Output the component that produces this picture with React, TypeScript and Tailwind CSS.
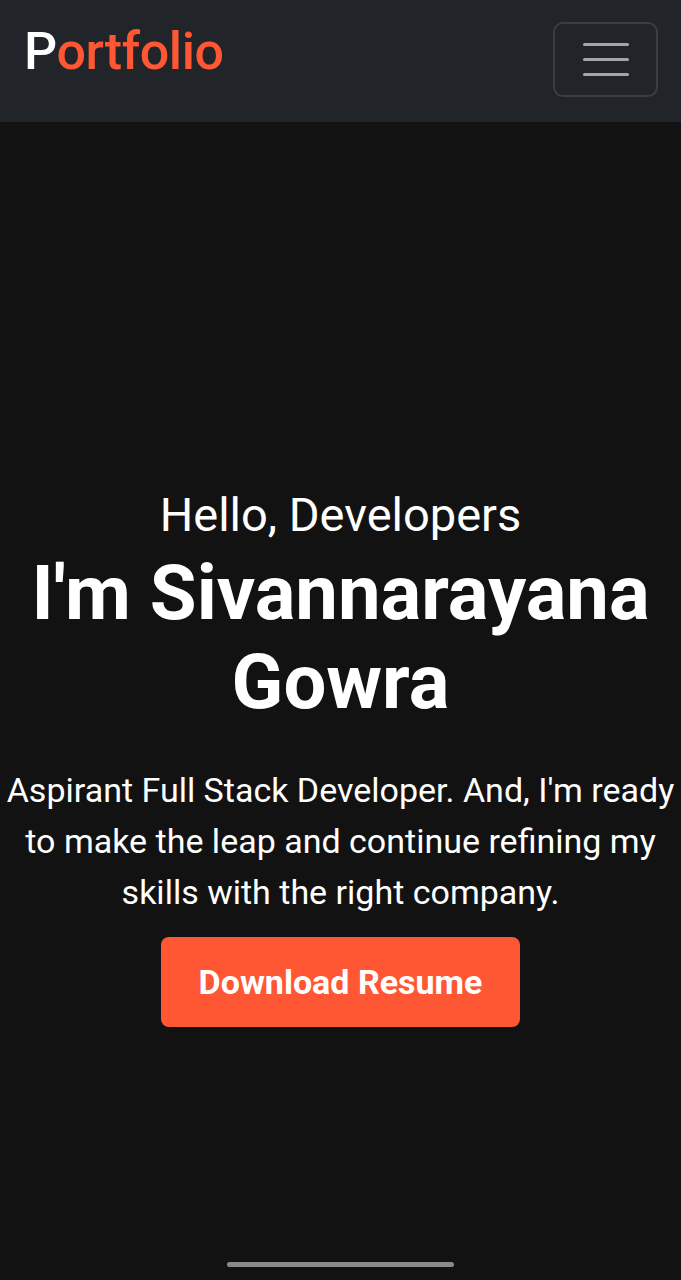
export default function App() {
  return (
    <div className="flex min-h-screen flex-col bg-[#121212] text-white" style={{ fontFamily: "Roboto, 'Noto Sans', sans-serif" }}>
      <nav className="flex h-[122px] items-start justify-between bg-[#212529] pl-[24px] pr-[23px]">
        <a href="#" className="pt-[26px] text-[52px] font-medium leading-none tracking-[-0.4px]">
          <span className="text-white">P</span>
          <span className="text-[#ff5733]">ortfolio</span>
        </a>
        <button className="mt-[22px] flex h-[75px] w-[105px] flex-col items-center justify-center gap-[12px] rounded-[10px] border-2 border-[#3a3d41]">
          <span className="h-[3px] w-[46px] rounded-full bg-[#a3a5a8]" />
          <span className="h-[3px] w-[46px] rounded-full bg-[#a3a5a8]" />
          <span className="h-[3px] w-[46px] rounded-full bg-[#a3a5a8]" />
        </button>
      </nav>

      <main className="flex flex-1 flex-col items-center px-[4px] pt-[365px] text-center">
        <p className="text-[47px] leading-[1.2]">Hello, Developers</p>
        <h1 className="mt-[6px] text-[76px] font-bold leading-[1.17]">
          I'm Sivannarayana
          <br />
          Gowra
        </h1>
        <p className="mt-[38px] text-[34px] leading-[51px]">
          Aspirant Full Stack Developer. And, I'm ready to make the leap and continue refining my skills with the right company.
        </p>
        <button className="mt-[19px] h-[90px] w-[359px] rounded-[8px] bg-[#ff5733] text-[34px] font-bold text-white">
          Download Resume
        </button>
      </main>

      <div className="flex justify-center pb-[13px]">
        <span className="h-[5px] w-[227px] rounded-full bg-[#8a8a8a]" />
      </div>
    </div>
  );
}
